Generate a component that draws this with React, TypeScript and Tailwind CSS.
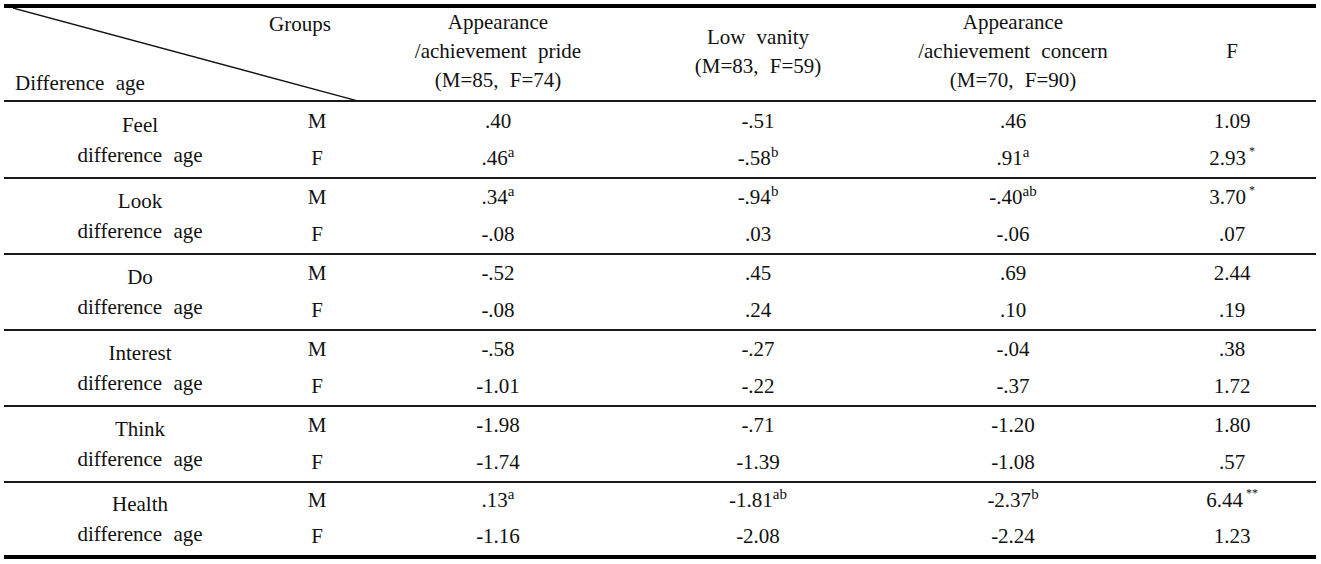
import React from 'react'

type Cell = [string, string?]

const groups: { name: string; rows: [Cell[], Cell[]] }[] = [
  { name: 'Feel', rows: [[['.40'], ['-.51'], ['.46'], ['1.09']], [['.46', 'a'], ['-.58', 'b'], ['.91', 'a'], ['2.93', '*']]] },
  { name: 'Look', rows: [[['.34', 'a'], ['-.94', 'b'], ['-.40', 'ab'], ['3.70', '*']], [['-.08'], ['.03'], ['-.06'], ['.07']]] },
  { name: 'Do', rows: [[['-.52'], ['.45'], ['.69'], ['2.44']], [['-.08'], ['.24'], ['.10'], ['.19']]] },
  { name: 'Interest', rows: [[['-.58'], ['-.27'], ['-.04'], ['.38']], [['-1.01'], ['-.22'], ['-.37'], ['1.72']]] },
  { name: 'Think', rows: [[['-1.98'], ['-.71'], ['-1.20'], ['1.80']], [['-1.74'], ['-1.39'], ['-1.08'], ['.57']]] },
  { name: 'Health', rows: [[['.13', 'a'], ['-1.81', 'ab'], ['-2.37', 'b'], ['6.44', '**']], [['-1.16'], ['-2.08'], ['-2.24'], ['1.23']]] },
]

const cols = 'grid grid-cols-[272px_82px_280px_240px_270px_168px]'

function Value({ cell }: { cell: Cell }) {
  const [v, s] = cell
  const star = s && s.startsWith('*')
  return (
    <span>
      {v}
      {s && (
        <sup className={star ? 'ml-[3px] text-[12px] top-[-0.85em]' : 'text-[15px] top-[-0.55em]'}>{s}</sup>
      )}
    </span>
  )
}

function Row({ label, cells }: { label: string; cells: Cell[] }) {
  return (
    <>
      <div className="flex items-center justify-center">{label}</div>
      {cells.map((c, ci) => (
        <div key={ci} className="flex items-center justify-center">
          <Value cell={c} />
        </div>
      ))}
    </>
  )
}

export default function App() {
  return (
    <div className="bg-white w-[1321px] h-[564px] pt-[4px] pl-[4px] text-[21px] text-[#111] [font-family:'Liberation_Serif',serif] [word-spacing:6px]">
      <div className="w-[1312px]">
        <div className="h-[4px] bg-black" />

        {/* header */}
        <div className={`${cols} h-[92px]`}>
          <div className="col-span-2 relative flex flex-col justify-between pt-[2px] pb-[2px] leading-[29px]">
            <svg className="absolute inset-0" width="354" height="92" viewBox="0 0 354 92" preserveAspectRatio="none">
              <line x1="9" y1="0" x2="354" y2="93" stroke="#111" strokeWidth="1.3" />
            </svg>
            <div className="pl-[265px]">Groups</div>
            <div className="pl-[11px]">Difference age</div>
          </div>
          <div className="flex items-center justify-center text-center leading-[29px] pb-[5px]">
            <div>Appearance<br />/achievement pride<br />(M=85, F=74)</div>
          </div>
          <div className="flex items-center justify-center text-center leading-[29px] pb-[5px]">
            <div>Low vanity<br />(M=83, F=59)</div>
          </div>
          <div className="flex items-center justify-center text-center leading-[29px] pb-[5px]">
            <div>Appearance<br />/achievement concern<br />(M=70, F=90)</div>
          </div>
          <div className="flex items-center justify-center text-center leading-[29px] pb-[5px]">
            <div>F</div>
          </div>
        </div>
        <div className="h-[2px] bg-[#1a1a1a]" />

        {/* body */}
        {groups.map((g, gi) => {
          const last = gi === groups.length - 1
          return (
            <div key={g.name}>
              <div className={`flex ${gi === 0 ? 'pt-[1px]' : ''}`}>
                <div className="w-[272px] flex flex-col items-center justify-center leading-[30px] pb-[1px]">
                  <div>{g.name}</div>
                  <div>difference age</div>
                </div>
                <div className={`grid grid-cols-[82px_280px_240px_270px_168px] ${last ? 'grid-rows-[36px_36px]' : 'grid-rows-[37px_37px]'}`}>
                  <Row label="M" cells={g.rows[0]} />
                  <Row label="F" cells={g.rows[1]} />
                </div>
              </div>
              {last ? <div className="h-[4px] bg-black" /> : <div className="h-[2px] bg-[#1a1a1a]" />}
            </div>
          )
        })}
      </div>
    </div>
  )
}
